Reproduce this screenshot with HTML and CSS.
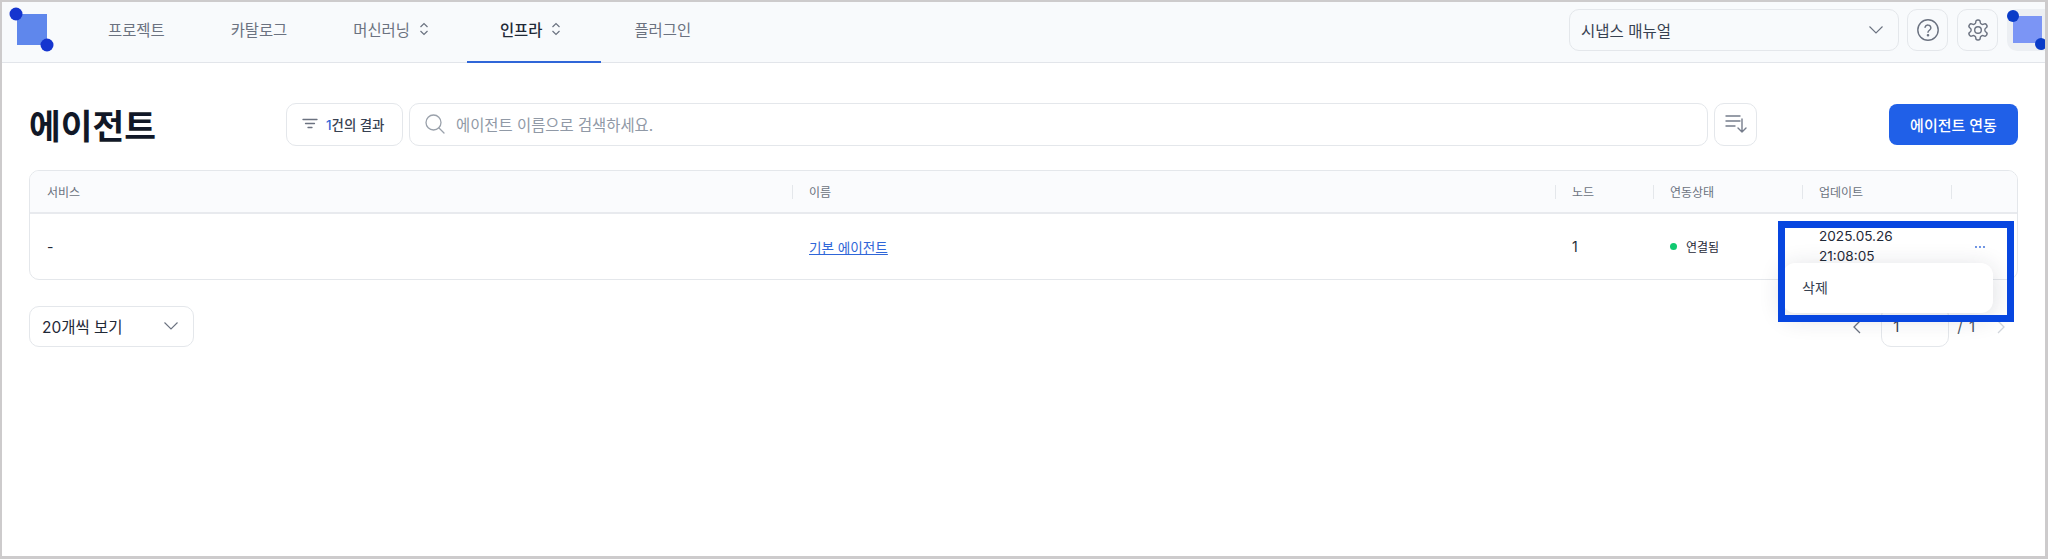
FILE: index.html
```html
<!DOCTYPE html>
<html lang="ko">
<head>
<meta charset="utf-8">
<title>에이전트</title>
<link rel="stylesheet" href="styles.css">
</head>
<body>
<div class="frame">
  <header class="topbar">
    <div class="logo">
      <svg width="73" height="60" viewBox="0 0 73 60"><rect x="15" y="12" width="30" height="31" fill="#5f87ec"/><circle cx="14" cy="12" r="6.5" fill="#1535cf"/><circle cx="45" cy="43" r="6.5" fill="#1535cf"/></svg>
    </div>
    <nav class="nav">
      <a class="nav-item">프로젝트</a>
      <a class="nav-item">카탈로그</a>
      <a class="nav-item has-icon">머신러닝<svg class="updown" width="16" height="16" viewBox="0 0 16 16"><path d="M4.500 6 8 2.500 11.500 6M4.500 10 8 13.500 11.500 10"/></svg></a>
      <a class="nav-item has-icon active">인프라<svg class="updown" width="16" height="16" viewBox="0 0 16 16"><path d="M4.500 6 8 2.500 11.500 6M4.500 10 8 13.500 11.500 10"/></svg></a>
      <a class="nav-item">플러그인</a>
    </nav>
    <div class="top-actions">
      <div class="manual">
        <span>시냅스 매뉴얼</span>
        <svg class="chev" width="16" height="10" viewBox="0 0 16 10"><path d="M1.500 1.500 8 8l6.500-6.500"/></svg>
      </div>
      <button class="icon-btn">
        <svg width="24" height="24" viewBox="0 0 24 24" class="line-icon"><circle cx="12" cy="12" r="10.200"/><path d="M9 9.300a3 3 0 0 1 5.900.7c0 2-2.900 2.400-2.900 4.300"/><circle class="dot" cx="12" cy="17.300" r=".6"/></svg>
      </button>
      <button class="icon-btn">
        <svg width="24" height="24" viewBox="0 0 24 24" class="line-icon"><path d="M12.220 2h-.44a2 2 0 0 0-2 2v.18a2 2 0 0 1-1 1.730l-.43.250a2 2 0 0 1-2 0l-.15-.08a2 2 0 0 0-2.730.730l-.22.380a2 2 0 0 0 .730 2.730l.15.100a2 2 0 0 1 1 1.720v.510a2 2 0 0 1-1 1.740l-.15.090a2 2 0 0 0-.730 2.730l.22.380a2 2 0 0 0 2.730.730l.15-.08a2 2 0 0 1 2 0l.43.250a2 2 0 0 1 1 1.730V20a2 2 0 0 0 2 2h.44a2 2 0 0 0 2-2v-.18a2 2 0 0 1 1-1.730l.43-.25a2 2 0 0 1 2 0l.15.080a2 2 0 0 0 2.730-.730l.22-.39a2 2 0 0 0-.730-2.730l-.15-.08a2 2 0 0 1-1-1.740v-.5a2 2 0 0 1 1-1.740l.15-.09a2 2 0 0 0 .730-2.730l-.22-.38a2 2 0 0 0-2.730-.730l-.15.080a2 2 0 0 1-2 0l-.43-.25a2 2 0 0 1-1-1.730V4a2 2 0 0 0-2-2z"/><circle cx="12" cy="12" r="3.300"/></svg>
      </button>
      <div class="avatar">
        <svg width="38" height="42" viewBox="0 0 38 42"><rect x="6" y="7" width="29" height="27" fill="#7b95f5"/><circle cx="6" cy="7" r="6" fill="#0a3cc8"/><circle cx="34" cy="35" r="6" fill="#0a3cc8"/></svg>
      </div>
    </div>
  </header>

  <main class="content">
    <div class="toolbar">
      <h1 class="title">에이전트</h1>
      <div class="tools">
        <button class="result-btn">
          <svg width="16" height="12" viewBox="0 0 16 12" class="line-icon thin"><path d="M1 1.500h14M3.500 5.500h9M6 9.500h4"/></svg>
          <span><b class="count">1</b>건의 결과</span>
        </button>
        <div class="search">
          <svg width="22" height="22" viewBox="0 0 22 22" class="line-icon search-ico"><circle cx="9.500" cy="9.500" r="7.500"/><path d="m15 15 5 5"/></svg>
          <span>에이전트 이름으로 검색하세요.</span>
        </div>
        <button class="sort-btn">
          <svg width="22" height="20" viewBox="0 0 22 20" class="line-icon sort-ico"><path d="M1 2h14M1 7h14M1 12h9M17 5v13M13 14l4 4 4-4"/></svg>
        </button>
      </div>
      <button class="primary">에이전트 연동</button>
    </div>

    <section class="table">
      <div class="thead">
        <div class="th">서비스</div>
        <div class="th sep">이름</div>
        <div class="th sep">노드</div>
        <div class="th sep">연동상태</div>
        <div class="th sep">업데이트</div>
        <div class="th sep"></div>
      </div>
      <div class="tbody">
        <div class="td">-</div>
        <div class="td"><a class="link">기본 에이전트</a></div>
        <div class="td">1</div>
        <div class="td status"><i class="dot-green"></i>연결됨</div>
        <div class="td date">2025.05.26<br>21:08:05</div>
        <div class="td more">
          <svg class="dots" width="10" height="4" viewBox="0 0 10 4"><circle cx="1" cy="2" r=".9"/><circle cx="5" cy="2" r=".9"/><circle cx="9" cy="2" r=".9"/></svg>
        </div>
      </div>
    </section>

    <div class="footer">
      <div class="page-size">
        <span>20개씩 보기</span>
        <svg class="chev" width="16" height="10" viewBox="0 0 16 10"><path d="M1.500 1.500 8 8l6.500-6.500"/></svg>
      </div>
      <div class="pager">
        <svg class="pg" width="9" height="14" viewBox="0 0 9 14"><path d="M8 1 2 7l6 6"/></svg>
        <div class="page-input">1</div>
        <span class="total">/ 1</span>
        <svg class="pg off" width="9" height="14" viewBox="0 0 9 14"><path d="m1 1 6 6-6 6"/></svg>
      </div>
    </div>
  </main>

  <div class="menu">삭제</div>
  <div class="highlight"></div>
</div>
</body>
</html>
```
FILE: styles.css
```css
* { box-sizing: border-box; }
html, body { margin: 0; height: 100%; }
body {
  font-family: Inter, "Noto Sans CJK KR", "Noto Sans", sans-serif;
  color: #1f2937;
  background: #fff;
}
button { font-family: inherit; }
.frame {
  position: relative;
  width: 2048px;
  height: 559px;
  overflow: hidden;
  border: solid #cdcbcc;
  border-width: 2px 3px 3px 2px;
}
.topbar {
  display: flex;
  align-items: stretch;
  height: 61px;
  background: #f8fafc;
  border-bottom: 1px solid #e2e5ea;
}
.logo { width: 73px; flex: none; }
.logo svg { display: block; }
.nav { display: flex; flex: 1; }
.nav-item {
  display: flex;
  align-items: center;
  gap: 6px;
  padding: 0 33px 6px;
  font-size: 15.4px;
  color: #6b7280;
  border-bottom: 2px solid transparent;
  margin-bottom: -1px;
}
.nav-item.has-icon { padding-right: 35px; }
.nav-item.active { color: #1f2937; font-weight: 500; border-bottom-color: #2f66d8; padding-right: 37px; }
.updown { fill: none; stroke: #6b7280; stroke-width: 1.2; }
.top-actions { display: flex; align-items: flex-start; padding-top: 7px; gap: 9px; }
.manual {
  width: 330px;
  height: 42px;
  display: flex;
  align-items: center;
  justify-content: space-between;
  padding: 0 14px 0 11px;
  border: 1px solid #e4e7eb;
  border-radius: 10px;
  font-size: 15.5px;
  color: #374151;
  margin-right: -1px;
}
.chev { fill: none; stroke: #6b7280; stroke-width: 1.1; flex: none; }
.icon-btn {
  width: 41px;
  height: 42px;
  padding: 0;
  display: flex;
  align-items: center;
  justify-content: center;
  background: #f8fafc;
  border: 1px solid #e4e7eb;
  border-radius: 10px;
}
.line-icon { fill: none; stroke: #6b7280; stroke-width: 1.4; stroke-linecap: round; stroke-linejoin: round; }
.line-icon .dot { fill: #6b7280; }
.thin { stroke-width: 1.3; }
.avatar {
  width: 38px;
  height: 42px;
  background: #eceff3;
  border-radius: 10px 0 0 10px;
  flex: none;
}
.avatar svg { display: block; }
.content { padding: 39px 27px 0 27px; }
.toolbar { display: flex; align-items: center; height: 44px; }
.title {
  width: 257px;
  margin: 0;
  font-size: 34.500px;
  font-weight: 700;
  color: #111827;
  flex: none;
}
.tools { display: flex; flex: 1; gap: 6px; align-items: center; }
.result-btn, .search, .sort-btn {
  height: 43px;
  background: #fff;
  border: 1px solid #e4e7eb;
  border-radius: 10px;
  display: flex;
  align-items: center;
}
.result-btn {
  width: 117px;
  padding: 0 0 0 15px;
  gap: 8px;
  font-size: 13.400px;
  font-weight: 500;
  color: #374151;
}
.count { color: #2f66d8; font-weight: 500; }
.search {
  width: 1299px;
  padding: 0 0 0 14px;
  gap: 10px;
  font-size: 15.4px;
  color: #9099a6;
}
.search-ico { stroke: #9aa1ab; stroke-width: 1.3; }
.sort-btn { width: 43px; padding: 0; justify-content: center; }
.sort-ico { stroke: #767d8c; stroke-width: 1.4; }
.primary {
  width: 129px;
  height: 41px;
  background: #2060e8;
  color: #fff;
  border: 0;
  border-radius: 8px;
  font-size: 15px;
  font-weight: 500;
  flex: none;
}
.table {
  margin-top: 24px;
  border: 1px solid #e4e7eb;
  border-radius: 10px;
  overflow: hidden;
}
.thead, .tbody {
  display: grid;
  grid-template-columns: 762px 763px 98px 149px 149px 1fr;
}
.thead {
  height: 43px;
  background: #fafbfd;
  border-bottom: 2px solid #e8eaee;
}
.th {
  display: flex;
  align-items: center;
  padding-left: 17px;
  font-size: 12px;
  color: #6b7280;
  position: relative;
}
.th.sep::before {
  content: "";
  position: absolute;
  left: 0;
  top: 14px;
  height: 14px;
  border-left: 1px solid #e4e7eb;
}
.tbody { height: 65px; }
.td {
  display: flex;
  align-items: center;
  padding-left: 17px;
  font-size: 14px;
  color: #1f2937;
}
.link { color: #2f66d8; text-decoration: underline; font-size: 13.600px; }
.status { font-size: 12px; gap: 9px; }
.dot-green { width: 7px; height: 7px; border-radius: 50%; background: #10c971; flex: none; }
.date { display: block; padding-top: 12px; line-height: 20px; font-size: 13.600px; }
.more { padding-left: 24px; }
.dots { fill: #2f66d8; }
.footer {
  display: flex;
  justify-content: space-between;
  align-items: center;
  margin-top: 25px;
}
.page-size {
  width: 165px;
  height: 41px;
  padding: 0 14px 0 12px;
  display: flex;
  align-items: center;
  justify-content: space-between;
  border: 1px solid #e4e7eb;
  border-radius: 10px;
  font-size: 15.5px;
  color: #1f2937;
}
.pager { display: flex; align-items: center; padding-right: 12px; margin-top: 1px; }
.pg { fill: none; stroke: #6b7280; stroke-width: 1.3; }
.pg.off { stroke: #d1d5db; margin-left: 21px; }
.page-input {
  width: 68px;
  height: 41px;
  margin-left: 20px;
  padding-left: 11px;
  display: flex;
  align-items: center;
  border: 1px solid #e4e7eb;
  border-radius: 10px;
  font-size: 15px;
  color: #374151;
}
.total { margin-left: 8px; font-size: 15px; letter-spacing: 1px; color: #4b5563; }
.menu {
  position: absolute;
  left: 1781px;
  top: 261px;
  width: 210px;
  height: 50px;
  padding: 0 0 3px 19px;
  display: flex;
  align-items: center;
  background: #fff;
  border-radius: 12px;
  font-size: 14px;
  color: #374151;
  box-shadow: 0 4px 24px rgba(30, 40, 60, .16);
}
.highlight {
  position: absolute;
  left: 1776px;
  top: 219px;
  width: 236px;
  height: 101px;
  border: 7px solid #0746e0;
}
```
